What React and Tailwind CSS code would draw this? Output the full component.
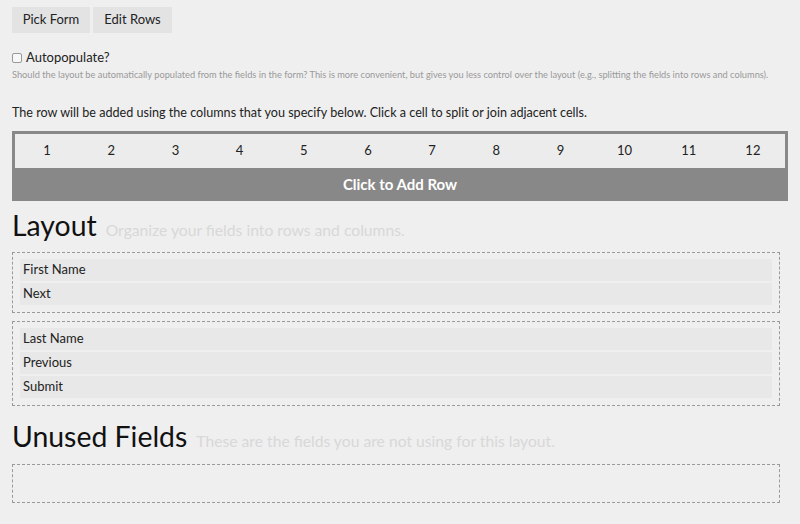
const columns = [1, 2, 3, 4, 5, 6, 7, 8, 9, 10, 11, 12]

const rows = [
  ['First Name', 'Next'],
  ['Last Name', 'Previous', 'Submit'],
]

function FieldRow({ fields }) {
  return (
    <div className="border border-dashed border-[#9a9a9a] px-[7px] pt-[6px] pb-[7px] flex flex-col gap-[2px]">
      {fields.map((name) => (
        <div key={name} className="h-[22px] bg-[#e8e8e8] flex items-center px-[3px] text-[13px] text-[#222]">
          {name}
        </div>
      ))}
    </div>
  )
}

function SectionTitle({ title, hint }) {
  return (
    <div className="flex items-baseline gap-[9px] h-[36px] leading-[35px] overflow-visible">
      <h2 className="text-[28.4px] text-[#111] font-normal">{title}</h2>
      <span className="text-[15.7px] text-[#d8d8d8]">{hint}</span>
    </div>
  )
}

export default function App() {
  return (
    <div
      className="min-h-[524px] w-[800px] bg-[#efefef] px-[12px] pt-[7px] text-[#222]"
      style={{ fontFamily: 'Lato, "Open Sans", sans-serif' }}
    >
      <div className="flex gap-[3px]">
        <button className="h-[26px] w-[78px] bg-[#e3e3e3] text-[13px] text-[#222]">Pick Form</button>
        <button className="h-[26px] w-[79px] bg-[#e3e3e3] text-[13px] text-[#222]">Edit Rows</button>
      </div>

      <label className="mt-[17px] flex items-center gap-[4px] h-[16px] text-[13px]">
        <span className="w-[10px] h-[10px] border border-[#999] rounded-[2px] bg-[#f7f7f7]" />
        Autopopulate?
      </label>
      <p className="mt-[3px] text-[9.25px] leading-[11px] text-[#999] whitespace-nowrap">
        Should the layout be automatically populated from the fields in the form? This is more convenient, but gives you less control over the layout (e.g., splitting the fields into rows and columns).
      </p>

      <p className="mt-[24px] text-[12.6px] leading-[18px] text-[#222]">
        The row will be added using the columns that you specify below. Click a cell to split or join adjacent cells.
      </p>

      <div className="mt-[9px] w-[776px] bg-[#888] pt-[3px] px-[3px]">
        <div className="grid grid-cols-12 h-[34px] bg-[#ececec]">
          {columns.map((n) => (
            <div key={n} className="flex items-center justify-center text-[13px] text-[#222]">
              {n}
            </div>
          ))}
        </div>
        <div className="h-[33px] flex items-center justify-center text-white font-bold text-[15px]">
          Click to Add Row
        </div>
      </div>

      <div className="mt-[7px]">
        <SectionTitle title="Layout" hint="Organize your fields into rows and columns." />
      </div>

      <div className="mt-[8px] w-[768px] flex flex-col gap-[8px]">
        {rows.map((fields, i) => (
          <FieldRow key={i} fields={fields} />
        ))}
      </div>

      <div className="mt-[13px]">
        <SectionTitle title="Unused Fields" hint="These are the fields you are not using for this layout." />
      </div>

      <div className="mt-[9px] w-[768px] h-[39px] border border-dashed border-[#9a9a9a]" />
    </div>
  )
}
